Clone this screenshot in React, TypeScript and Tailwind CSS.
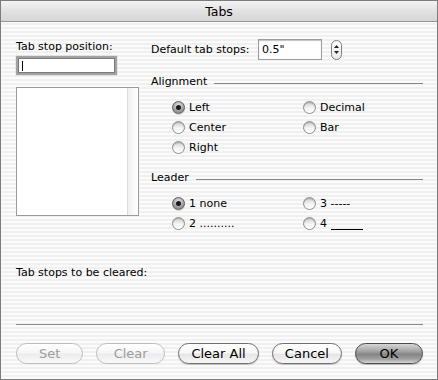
import React from 'react';

const stripes =
  'bg-[repeating-linear-gradient(to_bottom,#fbfbfb_0px,#fbfbfb_2px,#f0f0f0_2px,#f0f0f0_4px)]';

function Radio({ label, checked = false }: { label: React.ReactNode; checked?: boolean }) {
  return (
    <div className="flex items-center h-[20px]">
      {checked ? (
        <span className="w-[13px] h-[13px] rounded-full border border-[#5e5e5e] bg-[radial-gradient(circle_at_50%_30%,#e2e2e2_0%,#a4a4a4_55%,#7a7a7a_100%)] flex items-center justify-center shadow-[0_1px_1px_rgba(0,0,0,0.15)]">
          <span className="w-[5px] h-[5px] rounded-full bg-[#1a1a1a]" />
        </span>
      ) : (
        <span className="w-[13px] h-[13px] rounded-full border border-[#8e8e8e] bg-[linear-gradient(to_bottom,#cfcfcf_0%,#f4f4f4_55%,#ffffff_100%)] shadow-[inset_0_1px_1px_rgba(0,0,0,0.2)]" />
      )}
      <span className="ml-[4px]">{label}</span>
    </div>
  );
}

function Header({ title }: { title: string }) {
  return (
    <div className="flex items-center h-[13px]">
      <span>{title}</span>
      <div className="flex-1 h-px bg-[#858585] ml-[7px] mt-[4px]" />
    </div>
  );
}

function Button({
  label,
  disabled = false,
  primary = false,
  width,
}: {
  label: string;
  disabled?: boolean;
  primary?: boolean;
  width: string;
}) {
  let cls =
    'h-[21px] rounded-full flex items-center justify-center text-[13px] leading-none border ';
  if (primary) {
    cls +=
      'border-[#4a4a4a] text-black bg-[linear-gradient(to_bottom,#d6d6d6_0%,#a8a8a8_35%,#858585_55%,#a2a2a2_80%,#d6d6d6_100%)] shadow-[0_1px_1px_rgba(0,0,0,0.25)]';
  } else if (disabled) {
    cls +=
      'border-[#bdbdbd] text-[#9c9c9c] bg-[linear-gradient(to_bottom,#ffffff_0%,#f6f6f6_45%,#ececec_55%,#fafafa_100%)]';
  } else {
    cls +=
      'border-[#6f6f6f] text-black bg-[linear-gradient(to_bottom,#ffffff_0%,#f8f8f8_45%,#e6e6e6_55%,#f6f6f6_100%)] shadow-[0_1px_1px_rgba(0,0,0,0.2)]';
  }
  return <div className={cls + ' ' + width}>{label}</div>;
}

export default function App() {
  return (
    <div
      className={`w-[438px] h-[380px] border border-[#7c7c7c] flex flex-col text-black text-[11px] leading-[13px] ${stripes}`}
      style={{ fontFamily: '"DejaVu Sans", Verdana, sans-serif' }}
    >
      {/* title bar */}
      <div className="h-[21px] shrink-0 flex items-center justify-center border-b border-[#969696] bg-[linear-gradient(to_bottom,#f3f3f3_0%,#e2e2e2_50%,#d6d6d6_100%)] text-[12.5px]">
        Tabs
      </div>

      <div className="flex-1 flex flex-col pl-[15px] pr-[14px]">
        <div className="flex">
          {/* left column */}
          <div className="w-[123px] pt-[18px] flex flex-col">
            <div>Tab stop position:</div>
            <div className="mt-[5px] ml-[2px] w-[97px] h-[15px] bg-white border border-[#7a7a7a] shadow-[0_0_1px_2px_#a2a2a2] flex items-center pl-[3px]">
              <span className="w-px h-[10px] bg-black" />
            </div>
            <div className="mt-[14px] w-[123px] h-[129px] bg-white border border-[#9a9a9a] flex">
              <div className="flex-1" />
              <div className="w-[11px] border-l border-[#dcdcdc] bg-[linear-gradient(to_right,#f0f0f0,#ffffff)]" />
            </div>
          </div>

          {/* right column */}
          <div className="flex-1 ml-[12px] pt-[17px] flex flex-col">
            <div className="flex items-center h-[21px]">
              <span className="w-[107px]">Default tab stops:</span>
              <div className="w-[64px] h-[21px] bg-white border border-[#9c9c9c] shadow-[inset_0_1px_1px_rgba(0,0,0,0.25)] flex items-center pl-[3px]">
                0.5"
              </div>
              <div className="ml-[9px] w-[11px] h-[20px] rounded-full border border-[#7e7e7e] bg-[linear-gradient(to_bottom,#ffffff,#e8e8e8)] flex flex-col items-center justify-center gap-[3px]">
                <svg width="5" height="3" viewBox="0 0 5 3">
                  <path d="M2.5 0 L5 3 L0 3 Z" fill="#222" />
                </svg>
                <svg width="5" height="3" viewBox="0 0 5 3">
                  <path d="M0 0 L5 0 L2.5 3 Z" fill="#222" />
                </svg>
              </div>
            </div>

            <div className="mt-[15px]">
              <Header title="Alignment" />
            </div>
            <div className="mt-[9px] ml-[21px] grid grid-cols-[131px_1fr]">
              <Radio label="Left" checked />
              <Radio label="Decimal" />
              <Radio label="Center" />
              <Radio label="Bar" />
              <Radio label="Right" />
            </div>

            <div className="mt-[14px]">
              <Header title="Leader" />
            </div>
            <div className="mt-[9px] ml-[21px] grid grid-cols-[131px_1fr]">
              <Radio label="1 none" checked />
              <Radio label="3 -----" />
              <Radio label="2 .........." />
              <Radio
                label={
                  <span className="inline-flex items-end">
                    4<span className="ml-[4px] w-[32px] h-[9px] border-b border-black" />
                  </span>
                }
              />
            </div>
          </div>
        </div>

        <div className="mt-[33px]">Tab stops to be cleared:</div>

        <div className="mt-[45px] h-px bg-[#8a8a8a]" />

        <div className="mt-[18px] flex items-center gap-[13px]">
          <Button label="Set" disabled width="w-[68px]" />
          <Button label="Clear" disabled width="w-[69px]" />
          <Button label="Clear All" width="w-[82px]" />
          <Button label="Cancel" width="w-[70px]" />
          <Button label="OK" primary width="w-[69px]" />
        </div>
      </div>
    </div>
  );
}
